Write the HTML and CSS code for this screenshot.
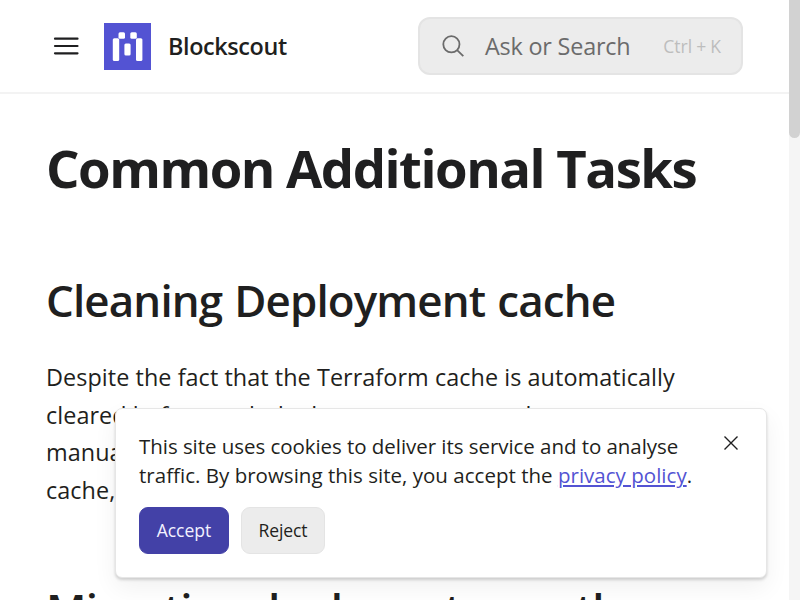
FILE: index.html
```html
<!DOCTYPE html>
<html lang="en">
<head>
<meta charset="utf-8">
<title>Common Additional Tasks | Blockscout</title>
<link rel="stylesheet" href="styles.css">
</head>
<body>
<div class="viewport">
<div class="page">
<header class="header">
  <svg class="menu" viewBox="0 0 26 26"><path d="M2 5.7h22.5M2 13h22.5M2 20.3h22.5"/></svg>
  <svg class="logo" viewBox="0 0 47 47"><rect width="47" height="47" fill="#5353d3"/><g fill="#fff"><rect x="14.5" y="9.3" width="6.5" height="6.4" rx="1.5"/><rect x="26.3" y="9.3" width="6.5" height="6.4" rx="1.5"/><rect x="8.8" y="15.2" width="6.4" height="22.8" rx="1.5"/><rect x="20.4" y="20.4" width="6.2" height="12" rx="1.5"/><rect x="32" y="15.2" width="6.4" height="22.8" rx="1.5"/></g></svg>
  <span class="brand">Blockscout</span>
  <div class="search">
    <svg class="glass" viewBox="0 0 24 24"><circle cx="10.4" cy="10.3" r="8.1"/><path d="M16.1 16.1l6.2 6"/></svg>
    <span class="prompt">Ask or Search</span>
    <span class="keys"><span>Ctrl</span><span>+</span><span>K</span></span>
  </div>
</header>
<main class="content">
  <h1>Common Additional Tasks</h1>
  <h2>Cleaning Deployment cache</h2>
  <p>Despite the fact that the Terraform cache is automatically<br>cleared before each deployment, you may also want to<br>manually clean it. To clear the<br>cache, run the following</p>
  <h2 class="next">Migrating deployer to another</h2>
</main>
</div>
<div class="track"><div class="thumb"></div></div>
<section class="cookies">
  <div class="row">
    <p><span class="tight">This site uses cookies to deliver its service and to analyse</span><br>traffic. By browsing this site, you accept the <a href="#">privacy policy</a>.</p>
    <svg class="close" viewBox="0 0 16 16"><path d="M1.5 1.5l13 13M14.5 1.5l-13 13"/></svg>
  </div>
  <div class="actions"><button class="accept">Accept</button><button class="reject">Reject</button></div>
</section>
</div>
</body>
</html>
```
FILE: styles.css
```css
* { box-sizing: border-box; }
body { margin: 0; font-family: "Open Sans", sans-serif; color: #1f1f20; background: #fff; overflow: hidden; }
.viewport { position: relative; display: flex; width: 800px; height: 600px; overflow: hidden; }
.page { flex: 1; }
.header { display: flex; align-items: center; height: 94px; padding: 0 46px 0 53px; border-bottom: 2px solid #f3f3f3; }
.menu { width: 26px; height: 26px; fill: none; stroke: #1f1f20; stroke-width: 2.2; stroke-linecap: round; }
.logo { width: 47px; height: 47px; margin-left: 25px; }
.brand { margin-left: 17px; font-size: 23.4px; font-weight: 600; letter-spacing: -.38px; }
.search { display: flex; align-items: center; width: 325px; height: 58px; margin-left: auto; padding: 0 20px 0 21px; border: 2px solid #e4e4e4; border-radius: 12px; background: #ececec; }
.glass { width: 24px; height: 24px; fill: none; stroke: #6b6b6b; stroke-width: 1.8; }
.prompt { margin-left: 20px; font-size: 23.4px; letter-spacing: -.2px; color: #6b6b6b; }
.keys { display: flex; gap: 4px; margin-left: auto; font-size: 17.55px; color: #bdbdbd; }
.content { padding: 0 0 0 46px; white-space: nowrap; }
h1 { margin: 45px 0 0; font-size: 52.7px; line-height: 58px; font-weight: 700; letter-spacing: -1.51px; }
h2 { margin: 74px 0 0; font-size: 43.9px; line-height: 58px; font-weight: 600; letter-spacing: -0.86px; word-spacing: 1.4px; }
h2.next { margin-top: 71px; letter-spacing: -.75px; word-spacing: 0; }
.content p { margin: 30px 0 0; font-size: 23.4px; line-height: 37.5px; letter-spacing: .06px; }
.track { width: 11px; background: #f5f5f5; }
.thumb { height: 138px; border-radius: 0 0 6px 6px; background: #d2d2d2; }
.cookies { position: absolute; left: 115px; top: 408px; width: 652px; height: 170px; padding: 23px; border: 1px solid #e6e6e6; border-radius: 7px; background: #fff; box-shadow: 0 2px 3px rgba(0,0,0,.16), 0 10px 25px rgba(0,0,0,.06); white-space: nowrap; }
.row { display: flex; justify-content: space-between; }
.cookies p { margin: 0; font-size: 20.5px; line-height: 29.3px; letter-spacing: .02px; }
.cookies .tight { letter-spacing: -.05px; }
.cookies a { color: #5353d3; }
.close { width: 16px; height: 16px; margin: 3px 4px 0 0; fill: none; stroke: #1f1f20; stroke-width: 1.4; }
.actions { display: flex; gap: 12px; margin-top: 16px; }
button { height: 47px; padding: 0; border: 1.5px solid #e4e4e4; border-radius: 9px; background: #ececec; color: #1f1f20; font: 17.55px "Open Sans", sans-serif; }
.accept { width: 90px; background: #4341a7; border-color: #4341a7; color: #f2f2ff; }
.reject { width: 84px; letter-spacing: -.1px; }
```
